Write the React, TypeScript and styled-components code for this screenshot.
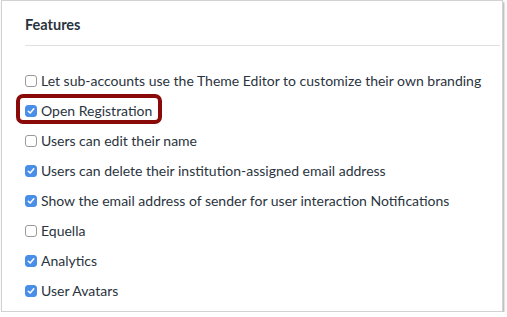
import React from "react";
import styled, { createGlobalStyle } from "styled-components";

const Global = createGlobalStyle`
  html, body { margin: 0; padding: 0; background: #ffffff; }
  body { font-family: Lato, "Open Sans", "Liberation Sans", sans-serif; }
`;

const Frame = styled.div`
  box-sizing: border-box;
  margin: 0 4px 0 1px;
  height: 312px;
  border: 1px solid #d2d2d2;
  box-shadow: 1px 2px 2px rgba(0, 0, 0, 0.35);
  background: #ffffff;
  padding: 0 2px 0 23px;
`;

const Header = styled.h2`
  margin: 14px 0 0;
  padding: 0 0 10px;
  font-size: 14.5px;
  line-height: 20px;
  font-weight: 700;
  color: #2a3440;
  border-bottom: 1px solid #e0e0e0;
`;

const List = styled.ul`
  list-style: none;
  margin: 20px 0 0;
  padding: 0;
  display: flex;
  flex-direction: column;
`;

const Row = styled.li`
  position: relative;
  height: 30px;
  display: flex;
  align-items: center;
  gap: 4px;
  font-size: 14px;
  line-height: 20px;
  color: #2a3440;
`;

const Box = styled.span<{ $checked: boolean }>`
  box-sizing: border-box;
  width: 12px;
  height: 12px;
  margin-bottom: 1px;
  border-radius: 3px;
  flex: none;
  display: flex;
  align-items: center;
  justify-content: center;
  background: ${(p) => (p.$checked ? "#4a8fe7" : "#ffffff")};
  border: 1px solid ${(p) => (p.$checked ? "#4a8fe7" : "#9a9a9a")};
`;

const Highlight = styled.span`
  position: absolute;
  left: -9px;
  top: -2px;
  width: 146px;
  height: 30px;
  box-sizing: border-box;
  border: 4px solid #8a0a0a;
  border-radius: 7px;
  pointer-events: none;
`;

const Check = () => (
  <svg width="8" height="8" viewBox="0 0 8 8" fill="none">
    <path d="M1.3 4.2 L3.2 6 L6.8 1.8" stroke="#ffffff" strokeWidth="1.5" strokeLinecap="round" strokeLinejoin="round" />
  </svg>
);

const items: { label: string; checked: boolean; highlight?: boolean }[] = [
  { label: "Let sub-accounts use the Theme Editor to customize their own branding", checked: false },
  { label: "Open Registration", checked: true, highlight: true },
  { label: "Users can edit their name", checked: false },
  { label: "Users can delete their institution-assigned email address", checked: true },
  { label: "Show the email address of sender for user interaction Notifications", checked: true },
  { label: "Equella", checked: false },
  { label: "Analytics", checked: true },
  { label: "User Avatars", checked: true },
];

export default function App() {
  return (
    <>
      <Global />
      <Frame>
        <Header>Features</Header>
        <List>
          {items.map((it) => (
            <Row key={it.label}>
              <Box $checked={it.checked}>{it.checked && <Check />}</Box>
              <span>{it.label}</span>
              {it.highlight && <Highlight />}
            </Row>
          ))}
        </List>
      </Frame>
    </>
  );
}
